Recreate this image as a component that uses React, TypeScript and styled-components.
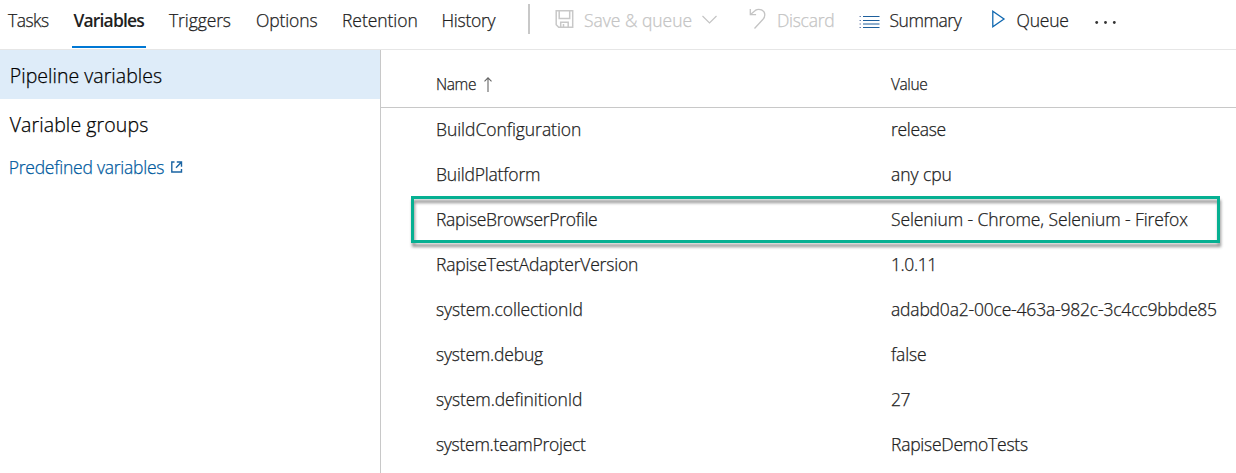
import React from "react";
import styled, { createGlobalStyle } from "styled-components";

const GlobalStyle = createGlobalStyle`
  * { box-sizing: border-box; }
  body {
    margin: 0;
    background: #fff;
    color: #212121;
    font-family: "Open Sans", "Noto Sans", sans-serif;
    font-size: 17.5px;
    font-weight: 300;
    -webkit-text-stroke: 0.25px currentColor;
    overflow: hidden;
  }
`;

const Page = styled.div`
  display: flex;
  flex-direction: column;
  height: 473px;
  width: 1236px;
  overflow: hidden;
`;

const Toolbar = styled.header`
  display: flex;
  height: 50px;
  flex: none;
  border-bottom: 1px solid #e6e6e6;
  line-height: 41px;
  white-space: nowrap;
`;

const Tab = styled.a<{ $width: number; $track: number; $active?: boolean }>`
  width: ${(p) => p.$width}px;
  height: 48px;
  margin-right: 23px;
  padding-left: ${(p) => (p.$active ? 1.5 : 0)}px;
  letter-spacing: ${(p) => p.$track}px;
  font-weight: ${(p) => (p.$active ? 600 : "inherit")};
  -webkit-text-stroke-width: ${(p) => (p.$active ? "0" : "inherit")};
  border-bottom: 2px solid ${(p) => (p.$active ? "#0078d4" : "transparent")};
`;

const Tabs = styled.nav`
  display: flex;
  width: 528px;
  padding-left: 8px;
`;

const Separator = styled.span`
  width: 2px;
  height: 30px;
  margin-top: 4px;
  background: #c8c8c8;
`;

const Action = styled.button<{ $left: number; $gap: number; $track: number; $disabled?: boolean }>`
  display: flex;
  height: 41px;
  margin: 0 0 0 ${(p) => p.$left}px;
  padding: 0;
  gap: ${(p) => p.$gap}px;
  border: 0;
  background: none;
  font: inherit;
  line-height: 41px;
  letter-spacing: ${(p) => p.$track}px;
  color: ${(p) => (p.$disabled ? "#c4c4c4" : "#212121")};
`;

const Glyph = styled.svg`
  display: block;
  flex: none;
  fill: none;
  overflow: visible;
`;

const ActionLabel = styled.span<{ $width: number }>`
  width: ${(p) => p.$width}px;
  text-align: left;
`;

const Body = styled.div`
  display: flex;
  flex: 1;
`;

const Sidebar = styled.aside`
  width: 381px;
  border-right: 1px solid #c8c8c8;
`;

const SideItem = styled.div<{ $track: number; $selected?: boolean }>`
  height: 49px;
  padding: 1px 0 0 9.75px;
  line-height: 50px;
  font-size: 19.5px;
  letter-spacing: ${(p) => p.$track}px;
  color: #000;
  background: ${(p) => (p.$selected ? "#deecf9" : "transparent")};
`;

const DocLink = styled.a`
  display: flex;
  align-items: center;
  gap: 7px;
  height: 38px;
  padding-left: 8.75px;
  letter-spacing: -0.24px;
  color: #005a9e;
`;

const Table = styled.main`
  flex: 1;
`;

const Columns = styled.div`
  display: grid;
  grid-template-columns: 455px 1fr;
  padding-left: 55px;
  white-space: nowrap;
`;

const HeadRow = styled(Columns)`
  height: 58px;
  padding-top: 5px;
  font-size: 15.5px;
  border-bottom: 1px solid #c8c8c8;
`;

const HeadCell = styled.div`
  display: flex;
  align-items: center;
  gap: 8px;
  height: 58px;
  letter-spacing: -0.4px;
`;

const Row = styled(Columns)`
  position: relative;
  height: 45px;
  line-height: 43px;
`;

const Cell = styled.span<{ $track: number }>`
  letter-spacing: ${(p) => p.$track}px;
`;

const Highlight = styled.div`
  position: absolute;
  left: 30px;
  top: -2px;
  width: 809px;
  height: 47px;
  border: 3px solid #06b092;
  filter: drop-shadow(1px 4px 1.5px rgba(0, 0, 0, 0.42));
`;

const tabs = [
  { label: "Tasks", width: 41, track: -0.5 },
  { label: "Variables", width: 74, track: -0.85, active: true },
  { label: "Triggers", width: 64, track: -0.1 },
  { label: "Options", width: 63, track: -0.12 },
  { label: "Retention", width: 76.5, track: -0.05 },
  { label: "History", width: 60, track: -0.25 },
];

const rows = [
  { name: "BuildConfiguration", nameTrack: -0.05, value: "release", valueTrack: -0.3 },
  { name: "BuildPlatform", nameTrack: -0.19, value: "any cpu", valueTrack: -0.07 },
  { name: "RapiseBrowserProfile", nameTrack: -0.29, value: "Selenium - Chrome, Selenium - Firefox", valueTrack: -0.09, highlighted: true },
  { name: "RapiseTestAdapterVersion", nameTrack: -0.19, value: "1.0.11", valueTrack: -0.4 },
  { name: "system.collectionId", nameTrack: -0.12, value: "adabd0a2-00ce-463a-982c-3c4cc9bbde85", valueTrack: -0.19 },
  { name: "system.debug", nameTrack: -0.2, value: "false", valueTrack: -0.16 },
  { name: "system.definitionId", nameTrack: -0.1, value: "27", valueTrack: -0.5 },
  { name: "system.teamProject", nameTrack: -0.28, value: "RapiseDemoTests", valueTrack: -0.24 },
];

const SaveIcon = () => (
  <Glyph width="19" height="40" stroke="#c8c8c8" strokeWidth="1.5">
    <path d="M1.2 10.700h16.500v16.500H3.700L1.200 24.700zM4.200 10.700v7.800h10.500v-7.800M5.700 27.200v-5h7.500v5M8.500 24v3" />
  </Glyph>
);

const ChevronIcon = () => (
  <Glyph width="15" height="40" stroke="#c4c4c4" strokeWidth="1.2">
    <path d="M.5 16l7 7 7-7" />
  </Glyph>
);

const UndoIcon = () => (
  <Glyph width="17" height="40" stroke="#c4c4c4" strokeWidth="1.3">
    <path d="M1.300 9v5.700h5.800M1.500 14.500L6.300 10.400C10 8 16 10 15.800 15c0 2-.8 3.200-2 4.500L5.500 28.500" />
  </Glyph>
);

const ListIcon = () => (
  <Glyph width="21" height="40" stroke="#1e5f9c" strokeWidth="1.2">
    <path d="M4 16.500h16.500M4 20.500h16.500M4 24h16.500M4 27.500h16.500" />
    <path d="M.5 16.500h1.500M.5 20.500h1.500M.5 24h1.500M.5 27.500h1.500" stroke="#6f83b0" />
  </Glyph>
);

const PlayIcon = () => (
  <Glyph width="13" height="40" stroke="#1068b0" strokeWidth="1.3">
    <path d="M.8 11.300v15.400L12 19z" />
  </Glyph>
);

const ExternalIcon = () => (
  <Glyph width="12" height="12" stroke="#1a64a3" strokeWidth="1.4">
    <path d="M3.500 1H.8v10h9.700V8M5.800 1h4.700v4.800M10.300 1.200L5 6.700" />
  </Glyph>
);

const SortIcon = () => (
  <Glyph width="8" height="15" stroke="#666" strokeWidth="1.1">
    <path d="M4 15V.8M.5 4.300L4 .8l3.500 3.500" />
  </Glyph>
);

const MoreIcon = () => (
  <Glyph width="22" height="40">
    <g fill="#333">
      <circle cx="1.700" cy="22.500" r="1.400" />
      <circle cx="10.500" cy="22.500" r="1.400" />
      <circle cx="19.300" cy="22.500" r="1.400" />
    </g>
  </Glyph>
);

export default function App() {
  return (
    <Page>
      <GlobalStyle />
      <Toolbar>
        <Tabs>
          {tabs.map((t) => (
            <Tab key={t.label} $width={t.width} $track={t.track} $active={t.active}>
              {t.label}
            </Tab>
          ))}
        </Tabs>
        <Separator />
        <Action $left={25} $gap={10} $track={-0.02} $disabled>
          <SaveIcon />
          <ActionLabel $width={108}>Save &amp; queue</ActionLabel>
          <ChevronIcon />
        </Action>
        <Action $left={32} $gap={11} $track={-0.28} $disabled>
          <UndoIcon />
          <ActionLabel $width={58}>Discard</ActionLabel>
        </Action>
        <Action $left={24} $gap={9.5} $track={-0.45}>
          <ListIcon />
          <ActionLabel $width={74}>Summary</ActionLabel>
        </Action>
        <Action $left={28} $gap={12} $track={-0.2}>
          <PlayIcon />
          <ActionLabel $width={53}>Queue</ActionLabel>
        </Action>
        <Action $left={25} $gap={0} $track={0} aria-label="More">
          <MoreIcon />
        </Action>
      </Toolbar>
      <Body>
        <Sidebar>
          <SideItem $track={0.04} $selected>Pipeline variables</SideItem>
          <SideItem $track={0.1}>Variable groups</SideItem>
          <DocLink>
            Predefined variables
            <ExternalIcon />
          </DocLink>
        </Sidebar>
        <Table>
          <HeadRow>
            <HeadCell>
              Name
              <SortIcon />
            </HeadCell>
            <HeadCell>Value</HeadCell>
          </HeadRow>
          {rows.map((r) => (
            <Row key={r.name}>
              <Cell $track={r.nameTrack}>{r.name}</Cell>
              <Cell $track={r.valueTrack}>{r.value}</Cell>
              {r.highlighted && <Highlight />}
            </Row>
          ))}
        </Table>
      </Body>
    </Page>
  );
}
